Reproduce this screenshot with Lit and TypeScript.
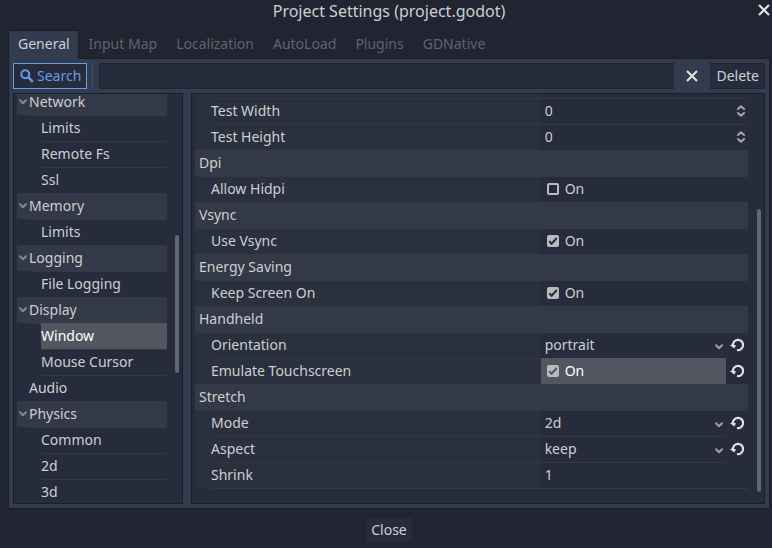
import { LitElement, html, css, svg, nothing } from "lit";
import { customElement, state } from "lit/decorators.js";
import { classMap } from "lit/directives/class-map.js";

interface TreeItem {
  text: string;
  kind: "group" | "leaf" | "root";
  line: "none" | "wide" | "deep";
}

interface Property {
  text: string;
  kind: "section" | "number" | "plain" | "check" | "select";
  value?: string;
  options?: string[];
  checked?: boolean;
  revert?: boolean;
  active?: boolean;
  line?: "wide" | "deep" | "deep-short";
}

const TABS = ["General", "Input Map", "Localization", "AutoLoad", "Plugins", "GDNative"];

const TREE: TreeItem[] = [
  { text: "Network", kind: "group", line: "none" },
  { text: "Limits", kind: "leaf", line: "wide" },
  { text: "Remote Fs", kind: "leaf", line: "deep" },
  { text: "Ssl", kind: "leaf", line: "deep" },
  { text: "Memory", kind: "group", line: "none" },
  { text: "Limits", kind: "leaf", line: "wide" },
  { text: "Logging", kind: "group", line: "none" },
  { text: "File Logging", kind: "leaf", line: "wide" },
  { text: "Display", kind: "group", line: "none" },
  { text: "Window", kind: "leaf", line: "wide" },
  { text: "Mouse Cursor", kind: "leaf", line: "deep" },
  { text: "Audio", kind: "root", line: "deep" },
  { text: "Physics", kind: "group", line: "none" },
  { text: "Common", kind: "leaf", line: "wide" },
  { text: "2d", kind: "leaf", line: "deep" },
  { text: "3d", kind: "leaf", line: "deep" },
];

const PROPERTIES: Property[] = [
  { text: "Test Width", kind: "number", value: "0", line: "deep" },
  { text: "Test Height", kind: "number", value: "0", line: "deep" },
  { text: "Dpi", kind: "section" },
  { text: "Allow Hidpi", kind: "check", line: "wide" },
  { text: "Vsync", kind: "section" },
  { text: "Use Vsync", kind: "check", checked: true, line: "wide" },
  { text: "Energy Saving", kind: "section" },
  { text: "Keep Screen On", kind: "check", checked: true, line: "wide" },
  { text: "Handheld", kind: "section" },
  { text: "Orientation", kind: "select", options: ["portrait", "landscape"], revert: true, line: "wide" },
  { text: "Emulate Touchscreen", kind: "check", checked: true, revert: true, active: true, line: "deep-short" },
  { text: "Stretch", kind: "section" },
  { text: "Mode", kind: "select", options: ["2d", "disabled", "viewport"], revert: true, line: "wide" },
  { text: "Aspect", kind: "select", options: ["keep", "ignore", "expand"], revert: true, line: "deep-short" },
  { text: "Shrink", kind: "plain", value: "1", line: "deep-short" },
];

const chevron = html`<svg class="chevron" width="8" height="6" viewBox="0 0 8 6" aria-hidden="true">
  ${svg`<path d="M1 1.3 4 4.2 7 1.3" fill="none" stroke="currentColor" stroke-width="2" stroke-linecap="round" stroke-linejoin="round"/>`}
</svg>`;

const cross = html`<svg width="12" height="12" viewBox="0 0 12 12" aria-hidden="true">
  ${svg`<path d="M1 1 11 11M11 1 1 11" fill="none" stroke="currentColor" stroke-width="2.2"/>`}
</svg>`;

@customElement("app-root")
export class AppRoot extends LitElement {
  @state() private tab = "General";
  @state() private selected = "Window";

  static styles = css`
    :host {
      --base: #202531;
      --panel: #333b4f;
      --dark: #262c3b;
      --edge: #191e27;
      --line: #323846;
      --section: #333946;
      --label: #2a303d;
      --text: #cdcfd2;
      --highlight: #525661;
      --accent: #699ce8;
      display: flex;
      flex-direction: column;
      box-sizing: border-box;
      height: 100vh;
      padding: 0 2px 6px 8px;
      background: var(--base);
      color: var(--text);
      font: 14px/26px "Noto Sans", sans-serif;
      overflow: hidden;
    }
    * { box-sizing: border-box; }
    button, input, select {
      margin: 0;
      padding: 0;
      border: 0;
      border-radius: 0;
      background: none;
      color: inherit;
      font: inherit;
      outline: none;
    }
    svg { display: block; flex: none; }
    .titlebar {
      display: grid;
      grid-template-columns: 1fr auto 1fr;
      height: 30px;
      flex: none;
    }
    .titlebar h1 {
      grid-column: 2;
      margin: 0;
      font-size: 16px;
      line-height: 22px;
      font-weight: 400;
    }
    .dismiss {
      justify-self: end;
      height: 20px;
      display: flex;
      align-items: center;
      color: #e0e0e0;
    }
    .tabs { display: flex; flex: none; height: 28px; }
    .tab {
      height: 28px;
      padding: 0 9px 0 10px;
      color: #5f646e;
      line-height: 28px;
    }
    .tab.current {
      position: relative;
      height: 29px;
      padding: 0 8px 2px 9px;
      border: 1px solid var(--edge);
      border-bottom: 0;
      background: var(--panel);
      color: var(--text);
      line-height: 26px;
    }
    .panel {
      flex: 1;
      min-height: 0;
      display: flex;
      flex-direction: column;
      gap: 4px;
      padding: 4px;
      border: 1px solid var(--edge);
      background: var(--panel);
    }
    .toolbar { display: flex; flex: none; height: 26px; }
    .search {
      display: flex;
      align-items: center;
      gap: 3px;
      padding: 0 5px 0 6px;
      border: 1px solid var(--accent);
      background: var(--dark);
      color: var(--accent);
      line-height: 24px;
    }
    .divider { width: 1px; margin: 0 6px 0 5px; background: #494f60; }
    .query {
      flex: 1;
      min-width: 0;
      padding: 0 6px;
      border: 1px solid #202531;
      background: var(--dark);
    }
    .clear {
      width: 36px;
      display: flex;
      align-items: center;
      justify-content: center;
      color: #e0e0e0;
    }
    .delete {
      padding: 0 5px;
      border: 1px solid #202531;
      background: var(--dark);
      line-height: 24px;
    }
    .panes { flex: 1; min-height: 0; display: flex; gap: 8px; }
    .pane {
      display: flex;
      gap: 8px;
      padding: 0 3px;
      border: 1px solid var(--edge);
      background: var(--dark);
      overflow: hidden;
    }
    .pane.categories { width: 170px; flex: none; }
    .pane.inspector { flex: 1; min-width: 0; gap: 9px; }
    .track { position: relative; width: 4px; flex: none; }
    .thumb {
      position: absolute;
      left: 0;
      right: 0;
      border-radius: 2px;
      background: #616671;
    }
    .categories .thumb { top: 34.5%; height: 33.8%; }
    .inspector .thumb { top: 28.1%; height: 69.2%; }

    .tree {
      flex: 1;
      margin: -5px 0 0;
      padding: 0;
      list-style: none;
    }
    .node {
      display: flex;
      height: 26px;
      padding-left: 12px;
      background: linear-gradient(var(--line), var(--line)) no-repeat 24px 0 / 100% 1px;
      cursor: default;
    }
    .node.wide { background-position: 12px 0; }
    .node.group {
      align-items: center;
      gap: 2px;
      padding-left: 2px;
      background: var(--section);
    }
    .node.leaf { padding-left: 24px; }
    .node.picked .caption { background: var(--highlight); color: #fff; flex: 1; }
    .chevron { color: #9c9fa6; }
    .group .chevron { color: #85888f; }

    .properties { flex: 1; min-width: 0; }
    .lead { height: 4px; }
    .lead, .property {
      display: grid;
      grid-template-columns: 5fr 3fr;
    }
    .property { position: relative; height: 26px; }
    .property::before {
      content: "";
      position: absolute;
      top: 0;
      left: 16px;
      right: 0;
      height: 1px;
      background: var(--line);
    }
    .property.wide::before { left: 4px; }
    .property.deep-short::before { right: 22px; }
    .name { padding-left: 16px; background: var(--label); }
    .section {
      height: 26px;
      margin: 0;
      padding-left: 4px;
      background: var(--section);
      font-size: 14px;
      font-weight: 400;
    }
    .value { display: flex; min-width: 0; height: 26px; }
    .field {
      position: relative;
      flex: 1;
      min-width: 0;
      display: flex;
      align-items: center;
    }
    .field input[type="text"], .field select {
      width: 100%;
      height: 26px;
      padding-left: 4px;
      appearance: none;
    }
    .field option { background: var(--dark); }
    .field > svg { position: absolute; right: 3px; pointer-events: none; }
    .field > .chevron { top: 12px; }
    .toggle { flex: 1; display: flex; align-items: center; gap: 6px; padding-left: 6px; }
    .box { display: grid; width: 12px; height: 12px; }
    .box input, .box svg { grid-area: 1 / 1; }
    .box input {
      appearance: none;
      width: 12px;
      height: 12px;
      border: 2px solid #b9bbbe;
      border-radius: 2px;
    }
    .box input:checked { background: #b9bbbe; }
    .box svg { position: relative; pointer-events: none; color: var(--dark); visibility: hidden; }
    .box input:checked + svg { visibility: visible; }
    .active .field { background: var(--highlight); color: #fff; }
    .active .box svg { color: var(--highlight); }
    .revert {
      width: 22px;
      display: flex;
      align-items: center;
      justify-content: center;
      color: #e0e0e0;
    }
    .tail { height: 1px; margin-left: 16px; background: var(--line); }
    .footer { display: flex; flex: none; justify-content: center; padding-top: 9px; }
    .close {
      height: 24px;
      padding: 0 5px;
      background: var(--dark);
      line-height: 24px;
    }
  `;

  private renderNode(item: TreeItem) {
    const picked = item.text === this.selected;
    return html`<li
      role="treeitem"
      aria-selected=${picked}
      class=${classMap({ node: true, [item.kind]: true, [item.line]: true, picked })}
      @click=${() => { if (item.kind !== "group") this.selected = item.text; }}
    >${item.kind === "group" ? chevron : nothing}<span class="caption">${item.text}</span></li>`;
  }

  private renderField(p: Property, id: string) {
    switch (p.kind) {
      case "check":
        return html`<label class="toggle">
          <span class="box">
            <input id=${id} type="checkbox" .checked=${p.checked ?? false} />
            <svg width="12" height="12" viewBox="0 0 12 12" aria-hidden="true">
              <path d="M2.3 6.3 4.6 8.7 9.8 3" fill="none" stroke="currentColor" stroke-width="2" />
            </svg>
          </span>On</label>`;
      case "select":
        return html`<select id=${id}>${p.options!.map((o) => html`<option>${o}</option>`)}</select>${chevron}`;
      case "number":
        return html`<input id=${id} type="text" inputmode="numeric" .value=${p.value ?? ""} />
          <svg width="8" height="12" viewBox="0 0 8 12" aria-hidden="true">
            <path d="M1 4 4 1.2 7 4M1 8 4 10.8 7 8" fill="none" stroke="#a6a8ad" stroke-width="2" stroke-linecap="round" stroke-linejoin="round" />
          </svg>`;
      default:
        return html`<input id=${id} type="text" .value=${p.value ?? ""} />`;
    }
  }

  private renderProperty(p: Property, index: number) {
    if (p.kind === "section") return html`<h2 class="section">${p.text}</h2>`;
    const id = `property-${index}`;
    return html`<div class=${classMap({ property: true, [p.line ?? "deep"]: true, active: !!p.active })}>
      <label class="name" for=${id}>${p.text}</label>
      <div class="value">
        <div class="field">${this.renderField(p, id)}</div>
        ${p.revert
          ? html`<button class="revert" aria-label="Revert ${p.text}">
              <svg width="14" height="14" viewBox="0 0 14 14" aria-hidden="true">
                <path d="M3 8A5.1 5.1 0 1 1 7 12" fill="none" stroke="currentColor" stroke-width="2.2" />
                <path d="M0 7.2 2.5 6.2 6 7.6 4.3 10.6Z" fill="currentColor" />
              </svg>
            </button>`
          : nothing}
      </div>
    </div>`;
  }

  render() {
    return html`
      <header class="titlebar">
        <h1>Project Settings (project.godot)</h1>
        <button class="dismiss" aria-label="Close window">${cross}</button>
      </header>
      <nav class="tabs" role="tablist">
        ${TABS.map((t) => html`<button
          role="tab"
          aria-selected=${t === this.tab}
          class=${classMap({ tab: true, current: t === this.tab })}
          @click=${() => { this.tab = t; }}
        >${t}</button>`)}
      </nav>
      <main class="panel">
        <div class="toolbar">
          <button class="search">
            <svg width="14" height="14" viewBox="0 0 14 14" aria-hidden="true">
              <circle cx="5.3" cy="5.3" r="4" fill="none" stroke="currentColor" stroke-width="2" />
              <path d="M8.2 8.2 12.8 12.8" stroke="currentColor" stroke-width="2.4" />
            </svg>Search
          </button>
          <span class="divider"></span>
          <input class="query" type="text" aria-label="Search settings" />
          <button class="clear" aria-label="Clear search">${cross}</button>
          <button class="delete">Delete</button>
        </div>
        <div class="panes">
          <section class="pane categories">
            <ul class="tree" role="tree">${TREE.map((n) => this.renderNode(n))}</ul>
            <div class="track"><div class="thumb"></div></div>
          </section>
          <section class="pane inspector">
            <div class="properties">
              <div class="lead"><span class="name"></span></div>
              ${PROPERTIES.map((p, i) => this.renderProperty(p, i))}
              <div class="tail"></div>
            </div>
            <div class="track"><div class="thumb"></div></div>
          </section>
        </div>
      </main>
      <footer class="footer"><button class="close">Close</button></footer>
    `;
  }
}
